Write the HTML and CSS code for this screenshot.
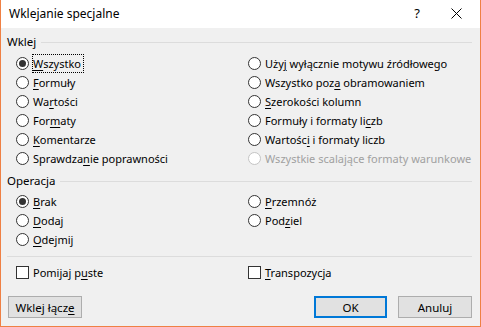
FILE: index.html
```html
<!DOCTYPE html>
<html lang="pl">
<head>
    <meta charset="UTF-8">
    <meta name="viewport" content="width=device-width, initial-scale=1.0">
    <title>Wklejanie specjalne</title>
    <link rel="stylesheet" href="styles.css">
</head>
<body>
    <div class="dialog">
        <div class="titlebar">
            <span class="title">Wklejanie specjalne</span>
            <span class="help">?</span>
            <span class="close">
                <svg width="11" height="11" viewBox="0 0 11 11">
                    <path d="M0.5 0.5 L10.5 10.5 M10.5 0.5 L0.5 10.5" stroke="#000" stroke-width="1" fill="none"/>
                </svg>
            </span>
        </div>

        <div class="content">
            <div class="legend">Wklej</div>
            <div class="options">
                <label class="option"><span class="radio checked"></span><span class="focus"><u>W</u>szystko</span></label>
                <label class="option"><span class="radio"></span><span>Uży<u>j</u> wyłącznie motywu źródłowego</span></label>
                <label class="option"><span class="radio"></span><span><u>F</u>ormuły</span></label>
                <label class="option"><span class="radio"></span><span>Wszystko poz<u>a</u> obramowaniem</span></label>
                <label class="option"><span class="radio"></span><span>Wa<u>r</u>tości</span></label>
                <label class="option"><span class="radio"></span><span><u>S</u>zerokości kolumn</span></label>
                <label class="option"><span class="radio"></span><span>For<u>m</u>aty</span></label>
                <label class="option"><span class="radio"></span><span>Formuły i formaty li<u>c</u>zb</span></label>
                <label class="option"><span class="radio"></span><span><u>K</u>omentarze</span></label>
                <label class="option"><span class="radio"></span><span>Wartośc<u>i</u> i formaty liczb</span></label>
                <label class="option"><span class="radio"></span><span>Sprawdza<u>n</u>ie poprawności</span></label>
                <label class="option disabled"><span class="radio"></span><span>Wszystkie scalające formaty warunkowe</span></label>
            </div>

            <div class="legend second">Operacja</div>
            <div class="options ops">
                <label class="option"><span class="radio checked"></span><span><u>B</u>rak</span></label>
                <label class="option"><span class="radio"></span><span><u>P</u>rzemnóż</span></label>
                <label class="option"><span class="radio"></span><span><u>D</u>odaj</span></label>
                <label class="option"><span class="radio"></span><span>Pod<u>z</u>iel</span></label>
                <label class="option"><span class="radio"></span><span><u>O</u>dejmij</span></label>
            </div>

            <div class="separator"></div>

            <div class="options checks">
                <label class="option"><span class="checkbox"></span><span>Pomijaj p<u>u</u>ste</span></label>
                <label class="option"><span class="checkbox"></span><span><u>T</u>ranspozycja</span></label>
            </div>

            <div class="buttons">
                <button class="btn">Wklej łącz<u>e</u></button>
                <span class="spacer"></span>
                <button class="btn default">OK</button>
                <button class="btn">Anuluj</button>
            </div>
        </div>
    </div>
</body>
</html>
```

FILE: styles.css
```css
* {
    box-sizing: border-box;
}

body {
    margin: 0;
    font-family: "Noto Sans", "Open Sans", sans-serif;
    font-size: 11px;
    color: #000;
}

.dialog {
    width: 481px;
    height: 327px;
    background: #f0f0f0;
    border: 1px solid #ef8044;
    border-top: 0;
    display: flex;
    flex-direction: column;
}

.titlebar {
    height: 28px;
    background: #fff;
    display: flex;
    align-items: center;
    padding-left: 8px;
    flex-shrink: 0;
}

.title {
    font-size: 12px;
    flex: 1;
    padding-bottom: 2px;
}

.help {
    font-size: 13px;
    width: 20px;
    text-align: center;
    margin-right: 24px;
    padding-bottom: 2px;
}

.close {
    display: flex;
    width: 11px;
    margin-right: 18px;
    padding-bottom: 2px;
}

.content {
    padding: 0 8px 0 6px;
}

.legend {
    display: flex;
    align-items: center;
    height: 14px;
    margin-top: 7px;
    line-height: 14px;
    font-size: 11.5px;
}

.legend::after {
    content: "";
    flex: 1;
    height: 1px;
    background: #dcdcdc;
    margin-left: 5px;
}

.legend.second {
    margin-top: 6px;
}

.options {
    display: grid;
    grid-template-columns: 232px 1fr;
    grid-auto-rows: 19px;
    padding-left: 9px;
    margin-top: 5px;
}

.options.ops {
    margin-top: 4px;
}

.option {
    display: flex;
    align-items: center;
    gap: 4px;
    white-space: nowrap;
}

.option u,
.btn u {
    text-underline-offset: 2px;
}

.radio {
    width: 13px;
    height: 13px;
    border: 1px solid #333;
    border-radius: 50%;
    background: #fff;
    flex-shrink: 0;
    display: flex;
    align-items: center;
    justify-content: center;
}

.radio.checked::after {
    content: "";
    width: 7px;
    height: 7px;
    border-radius: 50%;
    background: #333;
}

.focus {
    outline: 1px dotted #000;
    outline-offset: 0;
    padding: 1px 2px 1px 0;
    line-height: 15px;
}

.disabled {
    color: #a0a0a0;
}

.disabled .radio {
    border-color: #c4c4c4;
}

.separator {
    height: 1px;
    background: #dcdcdc;
    margin-top: 7px;
}

.options.checks {
    margin-top: 6px;
}

.checkbox {
    width: 13px;
    height: 13px;
    border: 1px solid #333;
    background: #fff;
    flex-shrink: 0;
}

.buttons {
    display: flex;
    gap: 11px;
    margin-top: 14px;
    padding-left: 1px;
}

.spacer {
    flex: 1;
}

.btn {
    width: 74px;
    height: 22px;
    background: #e1e1e1;
    border: 1px solid #adadad;
    font-family: inherit;
    font-size: 11.5px;
    color: #000;
    padding: 0;
}

.btn.default {
    border: 2px solid #0078d7;
    width: 73px;
}
```
